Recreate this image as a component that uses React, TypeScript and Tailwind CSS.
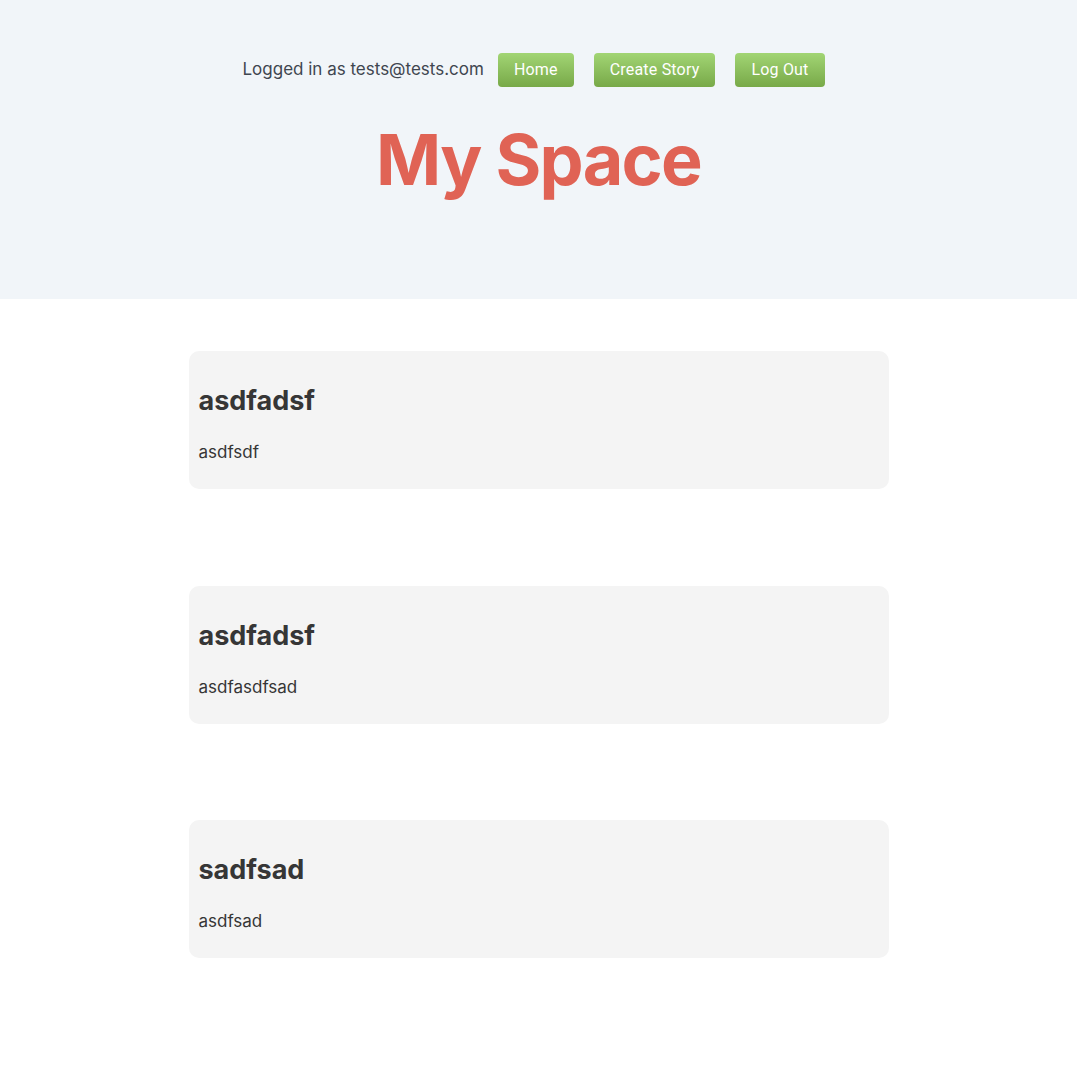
import React from 'react';

const stories = [
  { title: 'asdfadsf', body: 'asdfsdf' },
  { title: 'asdfadsf', body: 'asdfasdfsad' },
  { title: 'sadfsad', body: 'asdfsad' },
];

function NavButton({ label }: { label: string }) {
  return (
    <button className="h-[34px] px-4 rounded-[4px] bg-gradient-to-b from-[#a2d574] to-[#78a948] text-white text-[16px] tracking-[0.012em] font-['Roboto',sans-serif]">
      {label}
    </button>
  );
}

export default function App() {
  return (
    <div className="min-h-screen bg-white font-['Inter',sans-serif]">
      {/* Header */}
      <header className="h-[299px] bg-[#f1f5f9] pt-[53px]">
        <div className="flex items-center justify-center pr-[10px]">
          <span className="text-[17px] text-[#3f4650] mr-[14px]">Logged in as tests@tests.com</span>
          <div className="flex gap-5">
            <NavButton label="Home" />
            <NavButton label="Create Story" />
            <NavButton label="Log Out" />
          </div>
        </div>
        <h1 className="mt-[33px] text-center text-[70px] leading-[80px] tracking-[-0.025em] font-bold text-[#e06355]">My Space</h1>
      </header>

      {/* Stories */}
      <main className="flex flex-col items-center pt-[52px] gap-[96.5px]">
        {stories.map((s, i) => (
          <div key={i} className="w-[700px] h-[138px] rounded-[10px] bg-[#f4f4f4] px-[10px] pt-[34px] text-[#363636]">
            <h2 className="text-[27px] leading-[32px] font-bold">{s.title}</h2>
            <p className="mt-[22px] text-[17px] leading-[26px]">{s.body}</p>
          </div>
        ))}
      </main>
    </div>
  );
}
